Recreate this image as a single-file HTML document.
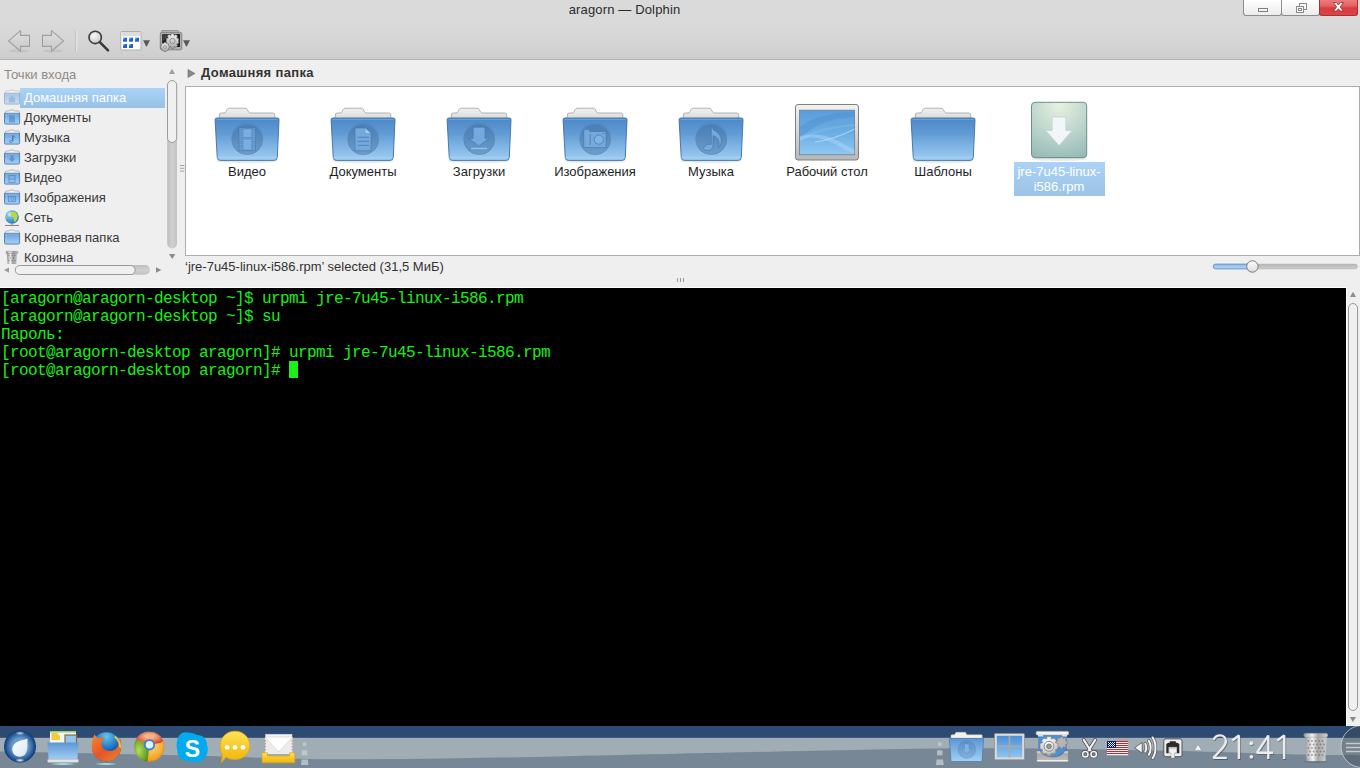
<!DOCTYPE html>
<html><head><meta charset="utf-8">
<style>
*{margin:0;padding:0;box-sizing:border-box}
html,body{width:1360px;height:768px;overflow:hidden;background:#000;font-family:"Liberation Sans",sans-serif;font-size:13px}
.a{position:absolute}
#top{left:0;top:0;width:1360px;height:60px;background:linear-gradient(#dadada 0,#dadada 22px,#d6d6d6 40px,#cdcdcd 59px);border-bottom:1px solid #b4b4b4}
#title{left:0;width:1249px;top:2px;letter-spacing:0.15px;text-align:center;color:#2a2a2a;font-size:13px;line-height:16px}
.wb{top:0;height:16px;width:39px;border:1px solid #8c8c8c;border-top:none;border-radius:0 0 3px 3px;background:linear-gradient(#fff,#ececec)}
#content{left:0;top:60px;width:1360px;height:228px;background:#efefef}
.pl{left:24px;color:#383838;font-size:13px;line-height:20px;height:20px;white-space:nowrap;margin-top:1px}
.lbl{width:116px;text-align:center;color:#1e1e1e;font-size:13px;line-height:15px}
#term{left:0;top:288px;width:1346px;height:438px;background:#000;font-family:"Liberation Mono",monospace;font-size:16px;letter-spacing:-0.6px;color:#18f018}
.tl{left:1px;height:18px;line-height:18px;white-space:pre;margin-top:2px}
#tb{left:0;top:726px;width:1360px;height:42px}
</style></head><body>
<!-- title + toolbar -->
<div id="top" class="a"></div>
<div id="title" class="a">aragorn — Dolphin</div>
<div class="a wb" style="left:1243px"><div class="a" style="left:14px;top:8px;width:10px;height:4px;border:1px solid #808080"></div></div>
<div class="a wb" style="left:1281px">
 <svg class="a" style="left:14px;top:3px" width="11" height="10"><rect x="3.5" y="0.5" width="7" height="6" fill="none" stroke="#8a8a8a"/><rect x="0.5" y="3.5" width="7" height="6" fill="#f4f4f4" stroke="#8a8a8a"/><rect x="2.5" y="5.5" width="3" height="2" fill="none" stroke="#8a8a8a"/></svg>
</div>
<div class="a wb" style="left:1319px;background:linear-gradient(#ea7d7d 0,#e46060 6px,#d93c3c 8px,#de4545 16px);border-color:#a83030">
 <svg class="a" style="left:12px;top:1px" width="14" height="12" viewBox="1332 1 14 12"><path d="M1333.4,2.6 H1336.6 L1338.4,5 L1340.2,2.6 H1343.4 L1340.2,6.9 L1343.4,11.1 H1340.2 L1338.4,8.8 L1336.6,11.1 H1333.4 L1336.6,6.9Z" fill="#fff" stroke="#8e2e2e" stroke-opacity="0.85" stroke-width="1"/></svg>
</div>

<div id="content" class="a"></div>
<!-- places header -->
<div class="a" style="left:4px;top:66px;color:#8f8a86;line-height:18px">Точки входа</div>
<div class="a" style="left:20px;top:88px;width:145px;height:20px;background:linear-gradient(#aad3f7,#98c1e7)"></div>
<div class="a pl" style="top:87px;color:#fff">Домашняя папка</div>
<div class="a pl" style="top:107px">Документы</div>
<div class="a pl" style="top:127px">Музыка</div>
<div class="a pl" style="top:147px">Загрузки</div>
<div class="a pl" style="top:167px">Видео</div>
<div class="a pl" style="top:187px">Изображения</div>
<div class="a pl" style="top:207px">Сеть</div>
<div class="a pl" style="top:227px">Корневая папка</div>
<div class="a" style="left:0;top:247px;width:165px;height:15px;overflow:hidden"><div class="a pl" style="top:0">Корзина</div></div>

<!-- breadcrumb -->
<svg class="a" style="left:187px;top:69px" width="9" height="9"><path d="M1 0.5 L8 4.5 L1 8.5Z" fill="#8a8a8a" stroke="#6a6a6a" stroke-width="0.6"/></svg>
<div class="a" style="left:201px;top:64px;font-weight:bold;color:#333;font-size:13px;line-height:18px;letter-spacing:0.35px">Домашняя папка</div>
<!-- view -->
<div class="a" style="left:185px;top:86px;width:1175px;height:170px;background:#fff;border:1px solid #adadad"></div>

<svg class="a" style="left:0;top:0" width="1360" height="300" viewBox="0 0 1360 300">
<defs>
 <linearGradient id="fg" x1="0" y1="0" x2="0" y2="1">
  <stop offset="0" stop-color="#4b88c7"/><stop offset="0.35" stop-color="#609ad3"/><stop offset="0.85" stop-color="#90c2ec"/><stop offset="1" stop-color="#a2cdf3"/>
 </linearGradient>
 <linearGradient id="bg" x1="0" y1="0" x2="0" y2="1"><stop offset="0" stop-color="#f0f0f0"/><stop offset="1" stop-color="#dadada"/></linearGradient>
 <linearGradient id="em" x1="0" y1="0" x2="0" y2="1"><stop offset="0" stop-color="#4f7fb2"/><stop offset="1" stop-color="#78aee0"/></linearGradient>
 <g id="fold"><ellipse cx="37" cy="61" rx="31" ry="1.8" fill="#000" opacity="0.1"/>
  <path d="M9.3,19 V15 Q9.3,13 11.5,13 H14 Q15.5,13 16.3,11.2 L17,9.6 Q17.7,8.2 19.5,8.2 H35 Q36.6,8.2 37.4,9.6 L38.1,11.2 Q39,13 40.6,13 H62.6 Q64.8,13 64.8,15 V19 Z" fill="url(#bg)" stroke="#a9a9a9" stroke-width="0.9"/>
  <path d="M6.6,18 H67.4 Q69.2,18 69,20 L67.3,57.2 Q67.1,60.4 64.2,60.4 H10.3 Q7.4,60.4 7.2,57.2 L5.1,20 Q5,18 6.6,18Z" fill="url(#fg)" stroke="#3b6ea6" stroke-width="0.9"/>
  <path d="M7.5,57.5 H66.6" stroke="#a8d2f7" stroke-width="1" opacity="0.7"/>
  <path d="M6.5,19.3 H67.5" stroke="#7fb0e2" stroke-width="1" opacity="0.8"/>
 </g>
 <g id="emb"><circle cx="37.2" cy="39" r="15.8" fill="#3a6796" fill-opacity="0.4" stroke="#3f6d9c" stroke-opacity="0.45" stroke-width="0.8"/><circle cx="37.2" cy="39.6" r="16" fill="none" stroke="#a5d3fa" stroke-opacity="0.35" stroke-width="0.6"/></g>
</defs>
<!-- Video -->
<g transform="translate(210,100)"><use href="#fold"/><use href="#emb"/>
 <g fill="#6a9fd5" stroke="#3e6c9d" stroke-opacity="0.6" stroke-width="0.7">
 <rect x="29" y="28" width="16.6" height="22.8"/>
 </g>
 <g fill="#7aaee0" stroke="#3e6c9d" stroke-opacity="0.5" stroke-width="0.6">
 <rect x="33" y="29" width="8.8" height="8.6"/><rect x="33" y="39" width="8.8" height="11"/>
 <rect x="30.1" y="29.6" width="1.8" height="1.8"/><rect x="30.1" y="33.6" width="1.8" height="1.8"/><rect x="30.1" y="37.6" width="1.8" height="1.8"/><rect x="30.1" y="41.6" width="1.8" height="1.8"/><rect x="30.1" y="45.6" width="1.8" height="1.8"/>
 <rect x="42.8" y="29.6" width="1.8" height="1.8"/><rect x="42.8" y="33.6" width="1.8" height="1.8"/><rect x="42.8" y="37.6" width="1.8" height="1.8"/><rect x="42.8" y="41.6" width="1.8" height="1.8"/><rect x="42.8" y="45.6" width="1.8" height="1.8"/>
 </g></g>
<!-- Documents -->
<g transform="translate(326,100)"><use href="#fold"/><use href="#emb"/>
 <path d="M29,28 H39 L45,33.5 V50.8 H29Z" fill="#74a9dd" stroke="#3e6c9d" stroke-opacity="0.6" stroke-width="0.8"/>
 <path d="M39,28 V33.5 H45" fill="#a0cdf3" stroke="#3e6c9d" stroke-opacity="0.5" stroke-width="0.6"/>
 <path d="M31.5,37.3 H43 M31.5,41.3 H43 M31.5,45.3 H43" stroke="#3e6c9d" stroke-opacity="0.7" stroke-width="0.9"/>
</g>
<!-- Downloads -->
<g transform="translate(442,100)"><use href="#fold"/><use href="#emb"/>
 <path d="M31.2,27.2 H43 V38.3 H46.9 L37,46.2 L26.9,38.3 H31.2Z" fill="#74a9dd" stroke="#3e6c9d" stroke-opacity="0.6" stroke-width="0.8"/>
 <rect x="28.7" y="47.3" width="17" height="2.4" fill="#8cc3f0" stroke="#3e6c9d" stroke-opacity="0.5" stroke-width="0.6"/>
</g>
<!-- Pictures -->
<g transform="translate(558,100)"><use href="#fold"/><use href="#emb"/>
 <path d="M25.8,31.5 V29.6 H31.6 V31.5 H48 V47.6 H25.8Z" fill="#74a9dd" stroke="#3e6c9d" stroke-opacity="0.6" stroke-width="0.8"/>
 <circle cx="40.8" cy="39.6" r="4.6" fill="#7fb3e4" stroke="#3e6c9d" stroke-opacity="0.7" stroke-width="0.9"/>
 <path d="M32.2,34 V45" stroke="#3e6c9d" stroke-opacity="0.7" stroke-width="0.9"/>
 <path d="M44.5,33.5 H47" stroke="#3e6c9d" stroke-opacity="0.7" stroke-width="0.8"/>
</g>
<!-- Music -->
<g transform="translate(674,100)"><use href="#fold"/><use href="#emb"/>
 <path d="M37.3,27 H38.9 V29.5 C42,31.5 48,35 47.3,41.5 C47,44.5 46,46.5 44.6,47.3 C46,43.5 45.5,38 39,35.5 V46 C39,49 36,50.8 33,50.6 C30.5,50.4 29.2,49 29.7,47.4 C30.3,45.5 33.5,43.6 37.3,44.4Z" fill="#74a9dd" stroke="#3e6c9d" stroke-opacity="0.6" stroke-width="0.8"/>
</g>
<!-- Templates -->
<g transform="translate(906,100)"><use href="#fold"/></g>
<!-- Desktop -->
<defs>
 <linearGradient id="dfr" x1="0" y1="0" x2="0" y2="1"><stop offset="0" stop-color="#f2f2f2"/><stop offset="0.5" stop-color="#d6d6d6"/><stop offset="1" stop-color="#b8b8b8"/></linearGradient>
 <linearGradient id="dsc" x1="0" y1="0" x2="0" y2="1"><stop offset="0" stop-color="#5a9ddb"/><stop offset="0.5" stop-color="#6aaee3"/><stop offset="1" stop-color="#90c8f1"/></linearGradient>
 <radialGradient id="rpm" cx="0.5" cy="0.05" r="1.05"><stop offset="0" stop-color="#e8f1e0"/><stop offset="0.45" stop-color="#c2d9cf"/><stop offset="1" stop-color="#93b9b6"/></radialGradient>
</defs>
<rect x="795.5" y="104.5" width="63" height="55.5" rx="2.5" fill="url(#dfr)" stroke="#808080" stroke-width="1"/>
<rect x="799.6" y="110.2" width="55" height="44.6" fill="url(#dsc)" stroke="#6b7f92" stroke-width="0.8"/>
<path d="M800,127 C815,115 835,113 854.5,112 V117 C835,118 818,122 800,138Z" fill="#4f8fd0" opacity="0.45"/>
<path d="M800,138 C815,128 835,126 854.5,124 V126 C835,128 815,131 800,142Z" fill="#8fc6f2" opacity="0.3"/>
<path d="M800,141 C812,133 830,140 845,150 L854.5,154 V150 C840,142 825,130 800,136Z" fill="#a9d6f7" opacity="0.5"/>
<path d="M815,142 C830,140 845,134 854.5,129" stroke="#b8e0fb" stroke-width="1.2" fill="none" opacity="0.7"/>
<!-- RPM -->
<rect x="1031.5" y="102.3" width="55.2" height="55.4" rx="3.5" fill="url(#rpm)" stroke="#6a908c" stroke-width="1"/>
<ellipse cx="1059" cy="159" rx="28" ry="2" fill="#000" opacity="0.08"/>
<path d="M1052.2,117 H1065.8 V130.4 H1072.3 L1059.1,145.6 L1045.7,130.4 H1052.2Z" fill="#f2f6f9" stroke="#b8cfcc" stroke-width="0.6"/>
</svg>

<!-- labels -->
<div class="a lbl" style="left:189px;top:164px">Видео</div>
<div class="a lbl" style="left:305px;top:164px">Документы</div>
<div class="a lbl" style="left:421px;top:164px">Загрузки</div>
<div class="a lbl" style="left:537px;top:164px">Изображения</div>
<div class="a lbl" style="left:653px;top:164px">Музыка</div>
<div class="a lbl" style="left:769px;top:164px">Рабочий стол</div>
<div class="a lbl" style="left:885px;top:164px">Шаблоны</div>
<div class="a" style="left:1014px;top:162px;width:91px;height:34px;background:linear-gradient(#aad3f7,#9bc3e6)"></div>
<div class="a lbl" style="left:1001px;top:164px;color:#fff">jre-7u45-linux-<br>i586.rpm</div>

<!-- toolbar icons -->
<svg class="a" style="left:0;top:25px" width="200" height="32" viewBox="0 25 200 32">
 <defs>
  <linearGradient id="ag" x1="0" y1="0" x2="0" y2="1"><stop offset="0" stop-color="#dedede"/><stop offset="1" stop-color="#c9c9c9"/></linearGradient>
  <radialGradient id="lens" cx="0.4" cy="0.35" r="0.7"><stop offset="0" stop-color="#f6f6f6"/><stop offset="1" stop-color="#c8c8c8"/></radialGradient>
  <linearGradient id="gear" x1="0" y1="0" x2="0" y2="1"><stop offset="0" stop-color="#f4f4f4"/><stop offset="1" stop-color="#a9a9a9"/></linearGradient>
 </defs>
 <ellipse cx="19" cy="51" rx="10" ry="1.6" fill="#000" opacity="0.06"/>
 <ellipse cx="53" cy="51" rx="10" ry="1.6" fill="#000" opacity="0.06"/>
 <path d="M8.6,40.9 L20.5,30.6 V35.4 H29.5 V46.4 H20.5 V51.2Z" fill="url(#ag)" stroke="#9f9f9f" stroke-width="1.1" stroke-linejoin="miter"/>
 <path d="M63.5,40.9 L51.5,30.6 V35.4 H42.5 V46.4 H51.5 V51.2Z" fill="url(#ag)" stroke="#9f9f9f" stroke-width="1.1"/>
 <path d="M75.8,30.5 V51.5" stroke="#b9b9b9" stroke-width="1"/><path d="M76.8,30.5 V51.5" stroke="#eeeeee" stroke-width="1"/>
 <circle cx="95.2" cy="37.4" r="6.2" fill="url(#lens)" stroke="#3c3c3c" stroke-width="1.6"/>
 <path d="M99.8,42.2 L108,50.3" stroke="#3a3a3a" stroke-width="2.6" stroke-linecap="round"/>
 <rect x="120.8" y="31.5" width="20.2" height="18.5" rx="1" fill="#fff" stroke="#a8a8a8" stroke-width="0.9"/>
 <rect x="121.3" y="32" width="19.2" height="4.3" fill="#dcdcdc"/>
 <g fill="#1d62d3">
  <rect x="123" y="37.7" width="4" height="4"/><rect x="129" y="37.7" width="4" height="4"/><rect x="135" y="37.7" width="4" height="4"/>
  <rect x="123" y="44" width="4" height="4"/><rect x="129" y="44" width="4" height="4"/>
 </g>
 <g fill="#8fc0f5"><rect x="123" y="37.7" width="1.5" height="1.5"/><rect x="129" y="37.7" width="1.5" height="1.5"/><rect x="135" y="37.7" width="1.5" height="1.5"/><rect x="123" y="44" width="1.5" height="1.5"/><rect x="129" y="44" width="1.5" height="1.5"/></g>
 <path d="M143,40.2 H150 L146.5,47Z" fill="#5a5a5a"/>
 <rect x="161.5" y="30.5" width="17" height="3" rx="1" fill="#bdbdbd" stroke="#8a8a8a" stroke-width="0.8"/>
 <rect x="160.3" y="32.3" width="21.5" height="17.5" rx="1.5" fill="#b0b0b0" stroke="#7c7c7c" stroke-width="0.9"/>
 <rect x="162" y="34" width="18" height="13" fill="#1c1c1c"/>
 <path d="M162,34 H172 L162,42Z" fill="#555" opacity="0.6"/>
 <g transform="translate(172.5,41)"><path d="M-1.2,-7.5 H1.2 L1.6,-5.5 L3.4,-6.6 L5.1,-4.9 L4.2,-3.1 L6.2,-2.6 V0 V2.4 L4.2,2.9 L5.1,4.8 L3.4,6.5 L1.6,5.4 L1.2,7.4 H-1.2 L-1.6,5.4 L-3.4,6.5 L-5.1,4.8 L-4.2,2.9 L-6.2,2.4 V-2.6 L-4.2,-3.1 L-5.1,-4.9 L-3.4,-6.6 L-1.6,-5.5Z" fill="url(#gear)" stroke="#6a6a6a" stroke-width="0.6"/><circle r="2.6" fill="none" stroke="#888" stroke-width="0.9"/></g>
 <g transform="translate(165,47)"><path d="M-0.9,-4.6 H0.9 L1.2,-3.4 L2.3,-4 L3.4,-2.9 L2.8,-1.9 L4.1,-1.5 V1.5 L2.8,1.9 L3.4,2.9 L2.3,4 L1.2,3.4 L0.9,4.6 H-0.9 L-1.2,3.4 L-2.3,4 L-3.4,2.9 L-2.8,1.9 L-4.1,1.5 V-1.5 L-2.8,-1.9 L-3.4,-2.9 L-2.3,-4 L-1.2,-3.4Z" fill="url(#gear)" stroke="#6a6a6a" stroke-width="0.6"/><circle r="1.5" fill="none" stroke="#888" stroke-width="0.7"/></g>
 <path d="M183,40.2 H190 L186.5,47Z" fill="#5a5a5a"/>
</svg>

<!-- places icons -->
<svg class="a" style="left:0;top:86px" width="24" height="180" viewBox="0 86 24 180">
 <defs>
  <linearGradient id="sf" x1="0" y1="0" x2="0" y2="1"><stop offset="0" stop-color="#6aa3dd"/><stop offset="1" stop-color="#a6d1f5"/></linearGradient>
  <g id="sfold">
   <path d="M1.5,6 V2.5 Q1.5,1.5 2.5,1.5 H5 L6,0.5 H9.5 L10.5,1.5 H14.5 Q15.3,1.5 15.3,2.5 V6Z" fill="#f2f2f2" stroke="#a5a5a5" stroke-width="0.8"/>
   <path d="M0.5,3.8 H15.6 V13.3 Q15.6,14.6 14.4,14.6 H1.7 Q0.5,14.6 0.5,13.3Z" fill="url(#sf)" stroke="#3b6ea6" stroke-width="0.8"/>
   <path d="M1,4.6 H15" stroke="#8ab8e6" stroke-width="0.8"/>
  </g>
 </defs>
 <g transform="translate(4,89.5)" opacity="0.55"><use href="#sfold"/><path d="M4,9.5 L8,6 L12,9.5 H11 V13 H5 V9.5Z" fill="#4a7fb8" opacity="0.7"/></g>
 <g transform="translate(4,109.5)"><use href="#sfold"/><path d="M5,5.8 H9 L11,7.8 V13 H5Z" fill="#4a7fb8" opacity="0.55"/></g>
 <g transform="translate(4,129.5)"><use href="#sfold"/><path d="M9,6 V11.5 C9,13 6,13.5 5.5,12.5 C5,11.5 7,10.5 8.5,11 V6 L11.5,8" fill="none" stroke="#3f72aa" stroke-width="1" opacity="0.7"/></g>
 <g transform="translate(4,149.5)"><use href="#sfold"/><path d="M6.5,6 H9.5 V9 H11.5 L8,12.5 L4.5,9 H6.5Z" fill="#4a7fb8" opacity="0.65"/></g>
 <g transform="translate(4,169.5)"><use href="#sfold"/><rect x="5" y="6" width="6" height="7" fill="none" stroke="#4a7fb8" stroke-width="0.9" opacity="0.7"/><path d="M5,9.5 H11" stroke="#4a7fb8" stroke-width="0.9" opacity="0.7"/></g>
 <g transform="translate(4,189.5)"><use href="#sfold"/><rect x="4.5" y="7" width="7" height="5" fill="none" stroke="#4a7fb8" stroke-width="0.9" opacity="0.7"/><circle cx="8.5" cy="9.5" r="1.5" fill="none" stroke="#4a7fb8" stroke-width="0.8" opacity="0.7"/></g>
 <g transform="translate(4,209.5)">
  <defs><radialGradient id="glb" cx="0.35" cy="0.3" r="0.7"><stop offset="0" stop-color="#e8f6ff"/><stop offset="0.35" stop-color="#6ab8ee"/><stop offset="1" stop-color="#2f78c0"/></radialGradient></defs>
  <path d="M8,14 V15.8" stroke="#8a8a8a" stroke-width="1.2"/>
  <circle cx="8" cy="7.5" r="6.8" fill="url(#glb)"/>
  <path d="M6.5,3 C8.5,1.8 11,2.2 12.5,3.5 C13.5,5 14,7 13.2,9 C12.5,11 11.5,12.5 10.5,12.5 C10,11 9.5,9.5 9.8,8.3 C8.5,8 7,7 6.8,5.8 C6.5,4.8 6.3,3.8 6.5,3Z M2.2,6.5 C3,7 3.5,8.5 3.2,10 C2.5,9.5 1.8,8 2.2,6.5Z" fill="#b9da38"/>
  <path d="M1,16 H15" stroke="#888" stroke-width="1.1"/>
 </g>
 <g transform="translate(4,229.5)"><use href="#sfold"/></g>
 <g transform="translate(5,251)">
  <defs><linearGradient id="tr2" x1="0" y1="0" x2="1" y2="0"><stop offset="0" stop-color="#8a8a8a"/><stop offset="0.35" stop-color="#f0f0f0"/><stop offset="0.6" stop-color="#9a9a9a"/><stop offset="1" stop-color="#c8c8c8"/></linearGradient></defs>
  <path d="M1.8,2 H12.2 L11.4,13 H2.6Z" fill="url(#tr2)"/>
  <g fill="#555" opacity="0.5"><circle cx="4" cy="4.5" r="0.7"/><circle cx="7" cy="4.5" r="0.7"/><circle cx="10" cy="4.5" r="0.7"/><circle cx="5.5" cy="7" r="0.7"/><circle cx="8.5" cy="7" r="0.7"/><circle cx="4" cy="9.5" r="0.7"/><circle cx="7" cy="9.5" r="0.7"/><circle cx="10" cy="9.5" r="0.7"/></g>
  <rect x="1" y="0.3" width="12" height="2.2" rx="1" fill="url(#tr2)" stroke="#7a7a7a" stroke-width="0.4"/>
 </g>
</svg>

<!-- places scrollbar -->
<svg class="a" style="left:0;top:60px" width="200" height="228" viewBox="0 60 200 228">
 <defs>
  <linearGradient id="trk" x1="0" y1="0" x2="1" y2="0"><stop offset="0" stop-color="#bdbdbd"/><stop offset="0.5" stop-color="#d0d0d0"/><stop offset="1" stop-color="#c2c2c2"/></linearGradient>
  <linearGradient id="trkh" x1="0" y1="0" x2="0" y2="1"><stop offset="0" stop-color="#bdbdbd"/><stop offset="0.5" stop-color="#d0d0d0"/><stop offset="1" stop-color="#c2c2c2"/></linearGradient>
 </defs>
 <path d="M169,74 L172,68.8 L175,74Z" fill="#a0a0a0"/>
 <rect x="167.2" y="120" width="9.8" height="128.5" rx="4.9" fill="url(#trk)"/>
 <rect x="167.5" y="80.5" width="9.2" height="62" rx="4.6" fill="#f0f0f0" stroke="#999" stroke-width="1"/>
 <path d="M169,254 H175.4 L172.2,259Z" fill="#8a8a8a"/>
 <path d="M180,165.5 H184.3 M180,168.3 H184.3 M180,171.1 H184.3" stroke="#9a9a9a" stroke-width="0.9"/>
 <rect x="100" y="265" width="50" height="9.8" rx="4.9" fill="url(#trkh)"/>
 <rect x="15.2" y="265.5" width="120" height="9" rx="4.5" fill="#f0f0f0" stroke="#999" stroke-width="1"/>
 <path d="M4,270 L9,267.4 V272.8Z" fill="#9a9a9a"/>
 <path d="M161.3,270 L156,267.2 V272.8Z" fill="#8a8a8a"/>
</svg>

<svg class="a" style="left:670px;top:272px" width="20" height="14" viewBox="670 272 20 14"><path d="M677.5,278 V282 M680.5,278 V282 M683.5,278 V282" stroke="#9a9a9a" stroke-width="1"/></svg>
<!-- slider -->
<svg class="a" style="left:1200px;top:255px" width="160" height="25" viewBox="1200 255 160 25">
 <defs>
  <linearGradient id="sb" x1="0" y1="0" x2="0" y2="1"><stop offset="0" stop-color="#8cbcec"/><stop offset="1" stop-color="#b4d6f6"/></linearGradient>
  <linearGradient id="sgr" x1="0" y1="0" x2="0" y2="1"><stop offset="0" stop-color="#b4b4b4"/><stop offset="1" stop-color="#cfcfcf"/></linearGradient>
  <linearGradient id="hn" x1="0" y1="0" x2="0" y2="1"><stop offset="0" stop-color="#fdfdfd"/><stop offset="1" stop-color="#dcdcdc"/></linearGradient>
 </defs>
 <rect x="1213.3" y="264.2" width="144" height="4.6" rx="2.3" fill="url(#sgr)" stroke="#a9a9a9" stroke-width="0.6"/>
 <rect x="1213.3" y="264.2" width="42" height="4.6" rx="2.3" fill="url(#sb)" stroke="#5b8fcf" stroke-width="0.8"/>
 <circle cx="1252.4" cy="266.5" r="5.7" fill="url(#hn)" stroke="#6d6d6d" stroke-width="0.9"/>
</svg>

<!-- terminal scrollbar -->
<div class="a" style="left:1347px;top:287px;width:13px;height:439px;background:#efefef"></div>
<svg class="a" style="left:1346px;top:288px" width="14" height="438" viewBox="1346 288 14 438">
 <path d="M1350,297 L1353,291.8 L1356,297Z" fill="#8f8f8f"/>
 <rect x="1348.5" y="303.5" width="9" height="407" rx="4.5" fill="#f0f0f0" stroke="#9a9a9a" stroke-width="1"/>
 <path d="M1349.8,717 H1356 L1352.9,722Z" fill="#8a8a8a"/>
</svg>

<!-- status -->
<div class="a" style="left:185px;top:259px;color:#333;line-height:16px">‘jre-7u45-linux-i586.rpm’ selected (31,5 МиБ)</div>

<!-- terminal -->
<div class="a" style="left:0;top:287px;width:1347px;height:439px;background:#fdfdfd"></div>
<div id="term" class="a">
<div class="a tl" style="top:0">[aragorn@aragorn-desktop ~]$ urpmi jre-7u45-linux-i586.rpm</div>
<div class="a tl" style="top:18px">[aragorn@aragorn-desktop ~]$ su</div>
<div class="a tl" style="top:36px">Пароль:</div>
<div class="a tl" style="top:54px">[root@aragorn-desktop aragorn]# urpmi jre-7u45-linux-i586.rpm</div>
<div class="a tl" style="top:72px">[root@aragorn-desktop aragorn]# </div>
<div class="a" style="left:289px;top:73px;width:9px;height:17px;background:#18f018"></div>
</div>

<!-- taskbar -->
<svg id="tb" class="a" width="1360" height="42" viewBox="0 726 1360 42">
 <defs>
  <radialGradient id="rosa" cx="0.5" cy="0.5" r="0.5"><stop offset="0.5" stop-color="#6a9bcc"/><stop offset="0.72" stop-color="#3f72ab"/><stop offset="0.9" stop-color="#1d4d88"/><stop offset="1" stop-color="#0f386f"/></radialGradient>
  <radialGradient id="glint" cx="0.5" cy="0.5" r="0.5"><stop offset="0" stop-color="#fff" stop-opacity="0.95"/><stop offset="1" stop-color="#fff" stop-opacity="0"/></radialGradient>
  <linearGradient id="drop" x1="0" y1="0" x2="1" y2="1"><stop offset="0" stop-color="#ffffff"/><stop offset="1" stop-color="#d8e6f2"/></linearGradient>
  <radialGradient id="ffb" cx="0.5" cy="0.15" r="0.8"><stop offset="0" stop-color="#5cc8f2"/><stop offset="0.55" stop-color="#1f6ab8"/><stop offset="1" stop-color="#0e2f72"/></radialGradient>
  <linearGradient id="ffo" x1="0" y1="0" x2="1" y2="1"><stop offset="0" stop-color="#f58a2a"/><stop offset="0.5" stop-color="#e6542a"/><stop offset="1" stop-color="#e88a2a"/></linearGradient>
  <linearGradient id="tfold" x1="0" y1="0" x2="0" y2="1"><stop offset="0" stop-color="#5b96d4"/><stop offset="1" stop-color="#a3d0f6"/></linearGradient>
  <linearGradient id="yel" x1="0" y1="0" x2="0" y2="1"><stop offset="0" stop-color="#ffe35a"/><stop offset="0.6" stop-color="#f5c521"/><stop offset="1" stop-color="#efb712"/></linearGradient>
  <linearGradient id="silv" x1="0" y1="0" x2="0" y2="1"><stop offset="0" stop-color="#f4f4f4"/><stop offset="1" stop-color="#a8a8a8"/></linearGradient>
  <linearGradient id="win" x1="0" y1="0" x2="0" y2="1"><stop offset="0" stop-color="#4b8fd6"/><stop offset="1" stop-color="#8cc6f2"/></linearGradient>
  <radialGradient id="glow" cx="0.5" cy="0.5" r="0.5"><stop offset="0" stop-color="#eaf6f6"/><stop offset="0.6" stop-color="#8fd6dc" stop-opacity="0.7"/><stop offset="1" stop-color="#8fd6dc" stop-opacity="0"/></radialGradient>
  <linearGradient id="trash" x1="0" y1="0" x2="1" y2="0"><stop offset="0" stop-color="#9a9a9a"/><stop offset="0.35" stop-color="#f4f4f4"/><stop offset="0.6" stop-color="#a5a5a5"/><stop offset="1" stop-color="#cfcfcf"/></linearGradient>
 </defs>
 <rect x="0" y="726" width="1360" height="42" fill="#778796"/>
 <path d="M0 737 H1360 V755.5 C1339.2 755.27 1328.3 755.42 1295 754.6 C1261.7 753.78 1215.8 751.67 1160 750.6 C1104.2 749.53 1033.3 747.83 960 748.2 C886.7 748.57 796.7 751.23 720 752.8 C643.3 754.37 565.0 756.52 500 757.6 C435.0 758.68 381.7 759.63 330 759.3 C278.3 758.97 245.0 756.88 190 755.6 C135.0 754.32 40.0 752.40 0 751.6Z" fill="#a1adb4"/>
 <rect x="0" y="726" width="1360" height="11.8" fill="#2d4a72"/>
 <!-- ROSA -->
 <circle cx="20" cy="746.5" r="16" fill="url(#rosa)"/>
 <ellipse cx="20" cy="733.2" rx="5" ry="2" fill="url(#glint)" opacity="0.8"/>
 <ellipse cx="20" cy="760.3" rx="5" ry="2" fill="url(#glint)"/>
 <path d="M27.5,738.5 C27,744 28.5,750 25,754.5 C22,757.5 16,757.5 13.5,753.5 C11,749.5 12.5,744.5 17,742 C20.5,740 24.5,740 27.5,738.5Z" fill="url(#drop)"/>
 <!-- files -->
 <rect x="50" y="731" width="26" height="12" fill="#f5f5f5"/>
 <rect x="50" y="731" width="26" height="1.6" fill="#9fd06a"/>
 <path d="M51.5,733 H57 L60,736 V740 H51.5Z" fill="#f6cc35"/>
 <rect x="65" y="735" width="11.5" height="9" fill="#92c4ee" stroke="#8a6a45" stroke-width="1.2"/>
 <path d="M47.3,742.5 H78.7 L77.3,760 H48.7Z" fill="url(#tfold)"/>
 <rect x="47.5" y="759.2" width="31" height="3.2" rx="1" fill="#e6e6e6" stroke="#a8a8a8" stroke-width="0.6"/>
 <ellipse cx="63" cy="764" rx="14" ry="1.5" fill="url(#glow)"/>
 <!-- firefox -->
 <circle cx="106.5" cy="746.8" r="14.6" fill="url(#ffb)"/>
 <path d="M94.5,734.5 C96,737 97.5,738 99.5,738.5 C101.5,737 103.5,737.5 105,739 C103,740 101.5,741.5 101.5,744 C101.5,748 105,751 110,751 C114.5,751 118.5,748 119.5,741 C120.5,737 119,735.5 117.5,734.5 C120.5,737 121.8,742 121.2,747.5 C120.5,755.5 114,761.5 106.5,761.5 C98.5,761.5 91.8,755 91.8,747 C91.8,742 92.8,738 94.5,734.5Z" fill="url(#ffo)"/>
 <path d="M114.8,736.5 C118,739 120,743 120.2,747.5" stroke="#ffd43a" stroke-width="2" fill="none" opacity="0.85"/>
 <ellipse cx="106" cy="764" rx="12" ry="1.4" fill="url(#glow)"/>
 <!-- chrome -->
 <defs>
  <radialGradient id="chr" cx="0.5" cy="0.35" r="0.6"><stop offset="0.25" stop-color="#f7b48a"/><stop offset="1" stop-color="#d9412a"/></radialGradient>
  <radialGradient id="chg" cx="0.3" cy="0.5" r="0.7"><stop offset="0" stop-color="#b6dc5a"/><stop offset="1" stop-color="#4f8e1c"/></radialGradient>
  <radialGradient id="chy" cx="0.5" cy="0.4" r="0.7"><stop offset="0" stop-color="#fde08a"/><stop offset="0.6" stop-color="#f7b03a"/><stop offset="1" stop-color="#e8861c"/></radialGradient>
 </defs>
 <circle cx="149.4" cy="746.9" r="15" fill="url(#chy)"/>
 <path d="M149.5,744.8 L136.2,739.3 A15,15 0 0,0 147.5,761.8 Z" fill="url(#chg)"/>
 <path d="M149.5,744.8 L136.2,739.3 A15,15 0 0,1 163.2,741 L160,743 Z" fill="url(#chr)"/>
 <circle cx="149.4" cy="746.9" r="14.6" fill="none" stroke="#000" stroke-opacity="0.12" stroke-width="0.8"/>
 <circle cx="149.5" cy="744.8" r="5.6" fill="#3d7fcb"/>
 <circle cx="149.5" cy="744.8" r="3.8" fill="#dff4fc"/>
 <!-- skype -->
 <path d="M184,732.5 C188,732 193,733 197,735 C203,735 207,739 207,745 C209,750 207,757 203,760 C199,763 193,763 188,761 C182,761 177,757 177.5,751 C176,746 176.5,739 179,736 C180.5,733.5 182,732.8 184,732.5Z" fill="#00aaee"/>
 <text x="192.3" y="756.5" text-anchor="middle" font-family="Liberation Sans" font-weight="bold" font-size="23" fill="#fff">S</text>
 <!-- chat -->
 <path d="M235,731.2 C243.5,731.2 249.7,737.5 249.7,745.5 C249.7,754 243,759.5 235,759.5 C231,759.5 228,758.5 226,757 L221.5,762.5 L222.5,754.5 C221,752 220.2,749 220.2,745.5 C220.2,737.5 226.5,731.2 235,731.2Z" fill="url(#yel)" stroke="#e5a60d" stroke-width="0.8"/>
 <circle cx="227.2" cy="747.3" r="2.4" fill="#fff"/><circle cx="235" cy="747.3" r="2.4" fill="#fff"/><circle cx="243" cy="747.3" r="2.4" fill="#fff"/>
 <!-- mail -->
 <rect x="265.5" y="734.2" width="26.5" height="3" fill="#f4f4f4" stroke="#c9c9c9" stroke-width="0.5"/>
 <rect x="265" y="737" width="27.5" height="17" fill="#ececec"/>
 <path d="M265,737 L278.7,752 L292.5,737Z" fill="#fdfdfd" stroke="#cfcfcf" stroke-width="0.6"/>
 <path d="M265.5,740 V752 M292,740 V752" stroke="#d47a60" stroke-width="0.8" stroke-dasharray="1.5,1.5"/>
 <path d="M262,752.8 H267.5 V756 H289.5 V752.8 H294.8 V762.8 H262Z" fill="url(#yel)" stroke="#d8a415" stroke-width="0.7"/>
 <!-- separators -->
 <g fill="#c8d0d4" opacity="0.75">
  <rect x="302.8" y="742.5" width="3.5" height="3.4"/><rect x="301.8" y="750.3" width="5.5" height="5"/><path d="M301.5,759.5 H307.8 L308.5,765 H301Z"/>
  <rect x="938" y="742.5" width="3.5" height="3.4"/><rect x="937" y="750.3" width="5.5" height="5"/><path d="M936.5,759.5 H943 L943.8,765 H936Z"/>
 </g>
 <!-- downloads folder -->
 <path d="M951,738 V735.5 Q951,734.8 952,734.8 H954.5 L956,732.3 H965.5 L966.8,734.8 H981.5 Q982.2,734.8 982.2,735.5 V738Z" fill="#f2f2f2" stroke="#bdbdbd" stroke-width="0.5"/>
 <path d="M949.3,738.5 H983.7 L982,760.8 Q981.8,761.5 981,761.5 H952 Q951.2,761.5 951,760.8Z" fill="url(#tfold)" stroke="#3f71a8" stroke-width="0.6"/>
 <circle cx="966.8" cy="749.5" r="8.8" fill="#3e6d9f" fill-opacity="0.25" stroke="#3e6d9f" stroke-opacity="0.35" stroke-width="0.6"/>
 <path d="M964.5,744 H969 V749 H971.5 L966.8,754 L962,749 H964.5Z" fill="#7fb3e4" stroke="#3e6c9d" stroke-opacity="0.5" stroke-width="0.5"/>
 <!-- windows -->
 <rect x="994.5" y="733.5" width="30" height="26.3" rx="1" fill="#dcdcdc" stroke="#8a8a8a" stroke-width="0.7"/>
 <rect x="996.8" y="735.8" width="25.4" height="21.6" fill="url(#win)"/>
 <path d="M1009.5,735.8 V757.4 M996.8,746.4 H1022.2" stroke="#a9a9a9" stroke-width="1.6"/>
 <!-- settings -->
 <defs>
  <linearGradient id="tray" x1="0" y1="0" x2="0" y2="1"><stop offset="0" stop-color="#f2f2f2"/><stop offset="0.25" stop-color="#a9a9a9"/><stop offset="0.75" stop-color="#b9b9b9"/><stop offset="0.85" stop-color="#f4f4f4"/><stop offset="1" stop-color="#a0a0a0"/></linearGradient>
  <radialGradient id="gearb" cx="0.45" cy="0.3" r="0.7"><stop offset="0" stop-color="#ffffff"/><stop offset="0.7" stop-color="#d2d2d2"/><stop offset="1" stop-color="#9a9a9a"/></radialGradient>
 </defs>
 <rect x="1038.2" y="734.5" width="28.6" height="24" fill="#4d8fd6"/>
 <path d="M1050,758 C1056,757 1062,754 1066.8,748 V758Z" fill="#2f6cb4" opacity="0.5"/>
 <rect x="1036.1" y="731.3" width="32.6" height="3.8" rx="1.2" fill="#f3f3f3" stroke="#8e8e8e" stroke-width="0.6"/>
 <rect x="1038" y="735" width="5" height="1.4" fill="#e0e0e0"/><rect x="1062" y="735" width="5" height="1.4" fill="#e0e0e0"/>
 <g transform="translate(1061.6,742.6)"><path d="M-1.2,-5.8 H1.2 L1.6,-4.2 L3.2,-5 L4.6,-3.5 L3.8,-2 L5.6,-1.6 V1.6 L3.8,2 L4.6,3.5 L3.2,5 L1.6,4.2 L1.2,5.8 H-1.2 L-1.6,4.2 L-3.2,5 L-4.6,3.5 L-3.8,2 L-5.6,1.6 V-1.6 L-3.8,-2 L-4.6,-3.5 L-3.2,-5 L-1.6,-4.2Z" fill="#b5b5b5" stroke="#6f6f6f" stroke-width="0.5"/></g>
 <g transform="translate(1049,746.3)"><path d="M-2,-9.8 H2 L2.5,-7.2 L5,-8.3 L7.5,-5.9 L6.3,-3.5 L9,-2.8 V2.8 L6.3,3.5 L7.5,5.9 L5,8.3 L2.5,7.2 L2,9.8 H-2 L-2.5,7.2 L-5,8.3 L-7.5,5.9 L-6.3,3.5 L-9,2.8 V-2.8 L-6.3,-3.5 L-7.5,-5.9 L-5,-8.3 L-2.5,-7.2Z" fill="url(#gearb)" stroke="#777" stroke-width="0.5"/><circle r="5" fill="none" stroke="#888" stroke-width="1"/><circle r="2.4" fill="#9a9a9a" stroke="#555" stroke-width="0.6"/></g>
 <path d="M1036.6,751 H1040.3 C1042.5,757.5 1060,760.5 1064.8,751 H1068.4 V762.3 H1036.6Z" fill="url(#tray)" stroke="#7a7a7a" stroke-width="0.6"/>
 <!-- scissors -->
 <g stroke-linecap="round">
  <path d="M1083.8,740 L1091.8,752.5 M1095.2,740 L1087.2,752.5" stroke="#4a4a4a" stroke-width="3.6"/>
  <path d="M1083.8,740 L1091.8,752.5 M1095.2,740 L1087.2,752.5" stroke="#f4f4f4" stroke-width="2.2"/>
  <circle cx="1085.3" cy="754.2" r="2.7" fill="none" stroke="#4a4a4a" stroke-width="2.8"/><circle cx="1085.3" cy="754.2" r="2.7" fill="none" stroke="#f4f4f4" stroke-width="1.6"/>
  <circle cx="1093.7" cy="754.2" r="2.7" fill="none" stroke="#4a4a4a" stroke-width="2.8"/><circle cx="1093.7" cy="754.2" r="2.7" fill="none" stroke="#f4f4f4" stroke-width="1.6"/>
 </g>
 <!-- flag -->
 <rect x="1107" y="741" width="21" height="14" fill="#fff"/>
 <g fill="#e8141a"><rect x="1107" y="741" width="21" height="1"/><rect x="1107" y="743" width="21" height="1"/><rect x="1107" y="745" width="21" height="1"/><rect x="1107" y="747" width="21" height="1"/><rect x="1107" y="749" width="21" height="1"/><rect x="1107" y="751" width="21" height="1"/><rect x="1107" y="753" width="21" height="1"/></g>
 <rect x="1106.5" y="754.5" width="22" height="1" fill="#cfe0ea" opacity="0.6"/>
 <rect x="1107" y="741" width="9" height="7" fill="#0a1a6a"/>
 <g fill="#fff" opacity="0.85"><rect x="1108" y="742" width="1" height="1"/><rect x="1110" y="742" width="1" height="1"/><rect x="1112" y="742" width="1" height="1"/><rect x="1114" y="742" width="1" height="1"/><rect x="1109" y="743" width="1" height="1"/><rect x="1111" y="743" width="1" height="1"/><rect x="1113" y="743" width="1" height="1"/><rect x="1108" y="744" width="1" height="1"/><rect x="1110" y="744" width="1" height="1"/><rect x="1112" y="744" width="1" height="1"/><rect x="1114" y="744" width="1" height="1"/><rect x="1109" y="745" width="1" height="1"/><rect x="1111" y="745" width="1" height="1"/><rect x="1113" y="745" width="1" height="1"/><rect x="1108" y="746" width="1" height="1"/><rect x="1110" y="746" width="1" height="1"/><rect x="1112" y="746" width="1" height="1"/><rect x="1114" y="746" width="1" height="1"/></g>
 <!-- volume -->
 <path d="M1134.6,747.8 L1142.2,742.4 V753.2 Z" fill="#f2f2f2" stroke="#505050" stroke-width="0.8" stroke-linejoin="round"/>
 <g fill="none" stroke-linecap="round">
  <path d="M1145.2,743.8 C1146.6,745.8 1146.6,749.8 1145.2,751.8" stroke="#505050" stroke-width="3.2"/>
  <path d="M1148.8,740.8 C1151.3,744.3 1151.3,751.3 1148.8,754.8" stroke="#505050" stroke-width="3.2"/>
  <path d="M1152.6,737.6 C1156.4,742.4 1156.4,753.2 1152.6,758.2" stroke="#505050" stroke-width="3.2"/>
  <path d="M1145.2,743.8 C1146.6,745.8 1146.6,749.8 1145.2,751.8" stroke="#f4f4f4" stroke-width="2"/>
  <path d="M1148.8,740.8 C1151.3,744.3 1151.3,751.3 1148.8,754.8" stroke="#f4f4f4" stroke-width="2"/>
  <path d="M1152.6,737.6 C1156.4,742.4 1156.4,753.2 1152.6,758.2" stroke="#f4f4f4" stroke-width="2"/>
 </g>
 <!-- network -->
 <rect x="1163.8" y="738.9" width="18.2" height="17.8" rx="2" fill="#ededed" stroke="#4a4a4a" stroke-width="0.9"/>
 <path d="M1166.3,744 L1168.3,742.8 H1169.8 V741.3 H1175.8 V742.8 H1177.3 L1179.3,744 V753.2 H1176.8 V747 H1168.8 V753.2 H1166.3Z" fill="#2a2a2a"/>
 <path d="M1168.8,747 H1176.8 V753 H1174.6 V758 H1171 V753 H1168.8Z" fill="#f0f0f0" stroke="#666" stroke-width="0.4"/>
 <path d="M1170,747.3 V749 M1171.5,747.3 V749 M1173,747.3 V749 M1174.5,747.3 V749 M1176,747.3 V749" stroke="#888" stroke-width="0.5"/>
 <!-- up arrow -->
 <path d="M1194.3,750.4 L1198,744.6 L1201.8,750.4Z" fill="#f2f2f2" stroke="#777" stroke-width="0.4"/>
 <!-- trash -->
 <ellipse cx="1315.5" cy="761.5" rx="12" ry="1.5" fill="#000" opacity="0.12"/>
 <path d="M1305,736.3 H1326.7 L1325.3,760.7 H1306.5Z" fill="url(#trash)"/>
 <g fill="#6a6a6a" opacity="0.65">
  <circle cx="1308.5" cy="741" r="0.9"/><circle cx="1312" cy="741" r="0.9"/><circle cx="1315.5" cy="741" r="0.9"/><circle cx="1319" cy="741" r="0.9"/><circle cx="1322.5" cy="741" r="0.9"/>
  <circle cx="1310" cy="744.5" r="0.9"/><circle cx="1313.5" cy="744.5" r="0.9"/><circle cx="1317" cy="744.5" r="0.9"/><circle cx="1320.5" cy="744.5" r="0.9"/><circle cx="1324" cy="744.5" r="0.9"/>
  <circle cx="1308.5" cy="748" r="0.9"/><circle cx="1312" cy="748" r="0.9"/><circle cx="1315.5" cy="748" r="0.9"/><circle cx="1319" cy="748" r="0.9"/><circle cx="1322.5" cy="748" r="0.9"/>
  <circle cx="1310" cy="751.5" r="0.9"/><circle cx="1313.5" cy="751.5" r="0.9"/><circle cx="1317" cy="751.5" r="0.9"/><circle cx="1320.5" cy="751.5" r="0.9"/><circle cx="1324" cy="751.5" r="0.9"/>
  <circle cx="1308.5" cy="755" r="0.9"/><circle cx="1312" cy="755" r="0.9"/><circle cx="1315.5" cy="755" r="0.9"/><circle cx="1319" cy="755" r="0.9"/><circle cx="1322.5" cy="755" r="0.9"/>
 </g>
 <rect x="1303.8" y="733.3" width="24" height="4" rx="1.8" fill="url(#trash)" stroke="#8a8a8a" stroke-width="0.4"/>
 <rect x="1306.3" y="758.5" width="19.2" height="2.6" fill="url(#trash)"/>
 <!-- menu circle -->
 <circle cx="1362" cy="746.5" r="21" fill="#3e4b57" fill-opacity="0.45" stroke="#e0e4e8" stroke-opacity="0.75" stroke-width="0.9"/>
 <path d="M1346,743.5 H1360 M1346,747.5 H1360 M1346,751.5 H1360" stroke="#d8dcdf" stroke-width="1.3" opacity="0.8"/>
</svg>
<svg class="a" style="left:1200px;top:726px" width="100" height="42" viewBox="1200 726 100 42">
 <defs><filter id="blr" x="-10%" y="-10%" width="120%" height="120%"><feGaussianBlur stdDeviation="0.6"/></filter></defs>
 <g fill="none" stroke-width="2.4" stroke-linejoin="bevel">
  <g stroke="#1e2833" opacity="0.45" transform="translate(0.7,0.9)" filter="url(#blr)">
   <path d="M1213.6,739.8 C1214.8,736.8 1217.3,735.4 1220,735.4 C1223.6,735.4 1225.9,737.8 1225.9,741.1 C1225.9,744.2 1224.3,746.3 1221.5,749.2 L1213.4,757.9 H1226.8"/>
   <path d="M1232.2,740.4 L1238.9,735.6 V759.1"/>
   <path d="M1268.3,759.1 V735.6 L1257,752.7 H1273.2"/>
   <path d="M1277.3,740.4 L1284.2,735.6 V759.1"/>
   <circle cx="1251.3" cy="743.2" r="0.9" stroke-width="2"/><circle cx="1251.3" cy="756.8" r="0.9" stroke-width="2"/>
  </g>
  <g stroke="#ececec">
   <path d="M1213.6,739.8 C1214.8,736.8 1217.3,735.4 1220,735.4 C1223.6,735.4 1225.9,737.8 1225.9,741.1 C1225.9,744.2 1224.3,746.3 1221.5,749.2 L1213.4,757.9 H1226.8"/>
   <path d="M1232.2,740.4 L1238.9,735.6 V759.1"/>
   <path d="M1268.3,759.1 V735.6 L1257,752.7 H1273.2"/>
   <path d="M1277.3,740.4 L1284.2,735.6 V759.1"/>
  </g>
 </g>
 <circle cx="1251.3" cy="743.2" r="1.9" fill="#ececec"/><circle cx="1251.3" cy="756.8" r="1.9" fill="#ececec"/>
</svg>

</body></html>
